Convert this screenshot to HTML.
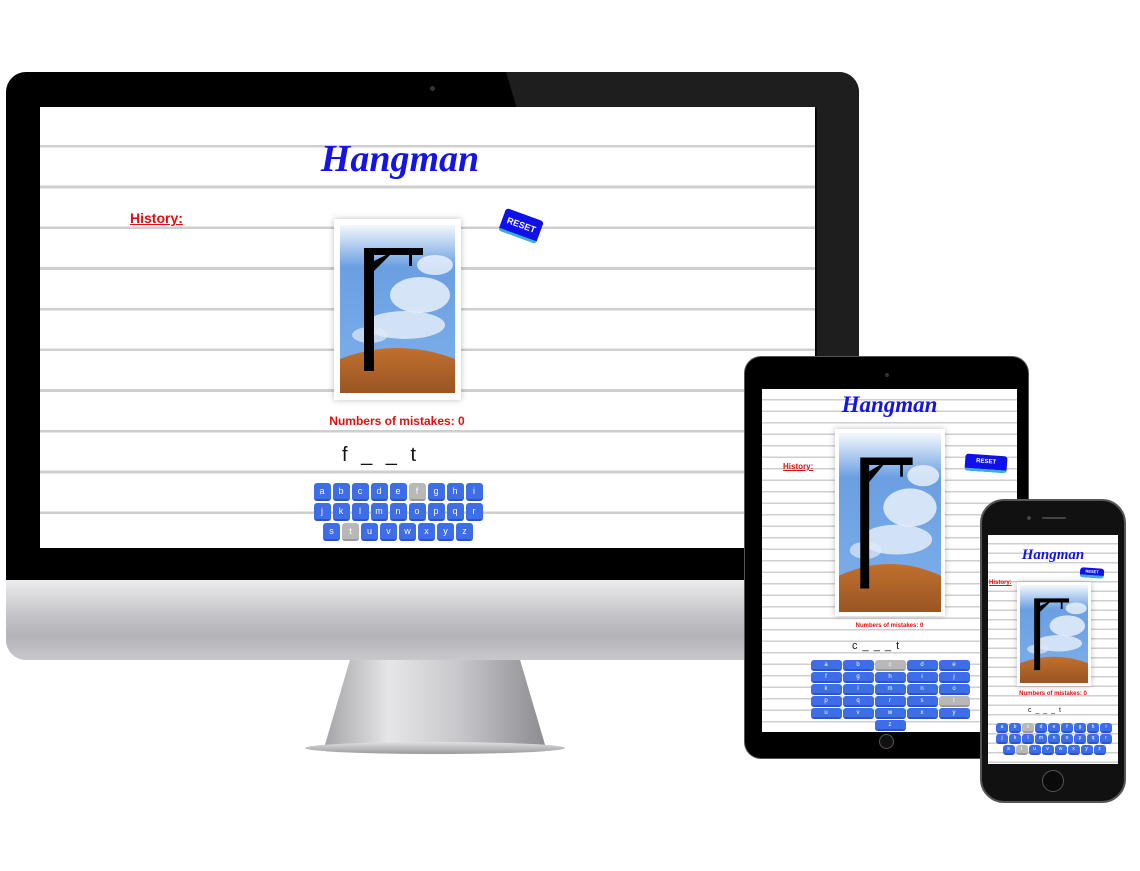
<!DOCTYPE html>
<html><head><meta charset="utf-8"><style>
*{margin:0;padding:0;box-sizing:border-box}
body{width:1140px;height:871px;background:#fff;position:relative;overflow:hidden;font-family:"Liberation Sans",sans-serif}
.a{position:absolute}
.lined{background-color:#fff;background-image:repeating-linear-gradient(to bottom,transparent 0,transparent var(--g),#cfcfcf var(--g),#cfcfcf calc(var(--g) + var(--t)))}
.title{font-family:"Liberation Serif",serif;font-style:italic;color:#1414e6;text-align:center;position:absolute;font-weight:bold}
.hist{color:#e01010;font-weight:bold;text-decoration:underline;position:absolute}
.mis{color:#e01010;font-weight:bold;position:absolute;text-align:center}
.kb{position:absolute;display:flex;flex-wrap:wrap;justify-content:center}
.k{background:#3d6ee8;color:#fff;border-radius:3px;display:flex;align-items:center;justify-content:center;border-bottom:2px solid #2a55c8}
.k.g{background:#b8b8b8;border-bottom-color:#999}
.card{position:absolute;background:#fff;box-shadow:0 0 6px rgba(0,0,0,.25)}
.reset{position:absolute;background:#1010e8;color:#fff;font-weight:bold;display:flex;align-items:center;justify-content:center;border-bottom:3px solid #3ab0d8;border-radius:3px}
</style></head><body>
<svg width="0" height="0" style="position:absolute">
<defs>
<linearGradient id="sky" x1="0" y1="0" x2="0" y2="1"><stop offset="0" stop-color="#f4f8fd"/><stop offset=".25" stop-color="#6a9fe2"/><stop offset="1" stop-color="#7fb0ea"/></linearGradient>
<linearGradient id="gr" x1="0" y1="0" x2="0" y2="1"><stop offset="0" stop-color="#c0702e"/><stop offset="1" stop-color="#9a5522"/></linearGradient>
<symbol id="pic" viewBox="0 0 115 168" preserveAspectRatio="none">
<rect width="115" height="168" fill="url(#sky)"/>
<ellipse cx="80" cy="70" rx="30" ry="18" fill="#e8f0fa" opacity=".85"/>
<ellipse cx="65" cy="100" rx="40" ry="14" fill="#e8f0fa" opacity=".8"/>
<ellipse cx="95" cy="40" rx="18" ry="10" fill="#eef4fb" opacity=".8"/>
<ellipse cx="30" cy="110" rx="18" ry="8" fill="#e0eaf8" opacity=".7"/>
<path d="M0 134 Q57 112 115 134 L115 168 L0 168Z" fill="url(#gr)"/>
<path d="M24 23h59v7h-49v116h-10z" fill="#000"/>
<path d="M34 36l12-6h4l-16 16z" fill="#000"/>
<rect x="69" y="30" width="3" height="11" fill="#000"/>
</symbol>
</defs></svg>

<!-- Desktop monitor -->
<div class="a" style="left:6px;top:72px;width:853px;height:588px;border-radius:20px;background:#c8c8ca;overflow:hidden">
 <div class="a" style="left:0;top:0;width:853px;height:508px;background:#000"></div>
 <div class="a" style="left:500px;top:0;width:353px;height:476px;background:#1e1e1e;clip-path:polygon(0 0,100% 0,100% 100%,88% 100%,88% 7.5%,3% 7.5%)"></div>
 <div class="a" style="left:0;top:508px;width:853px;height:80px;background:linear-gradient(180deg,#ececee,#c4c4c8 45%,#b4b4b8 70%,#c8c8cc)"></div>
</div>
<div class="a" style="left:430px;top:86px;width:5px;height:5px;border-radius:50%;background:#333"></div>
<div class="a" style="left:320px;top:660px;width:230px;height:86px;background:linear-gradient(90deg,#a0a0a4,#e6e6e8 30%,#c8c8cc 60%,#8a8a8e);clip-path:polygon(13% 0,87% 0,98% 100%,2% 100%)"></div>
<div class="a" style="left:305px;top:742px;width:260px;height:12px;border-radius:50%;background:linear-gradient(180deg,#e0e0e2,#9a9a9e)"></div>

<div class="a lined" style="left:40px;top:107px;width:775px;height:441px;--g:38px;--t:2.7px;background-position:0 0;overflow:hidden">
 <div class="title" style="left:0;width:720px;top:30px;font-size:38px">Hangman</div>
 <div class="hist" style="left:90px;top:103px;font-size:14px">History:</div>
 <div class="card" style="left:294px;top:112px;width:127px;height:181px"><svg class="a" style="left:6px;top:6px" width="115" height="168"><use href="#pic"/></svg></div>
 <div class="reset" style="left:461px;top:107px;width:40px;height:24px;font-size:9px;transform:rotate(20deg)">RESET</div>
 <div class="mis" style="left:257px;width:200px;top:307px;font-size:12px">Numbers of mistakes: 0</div>
 <div class="a" style="left:302px;top:337px;font-size:20px;word-spacing:8px;color:#111">f _ _ t</div>
 <div class="kb" style="left:269px;top:376px;width:178px;gap:2px 2px;font-size:9px">
  <div class="k" style="width:17px;height:18px">a</div><div class="k" style="width:17px;height:18px">b</div><div class="k" style="width:17px;height:18px">c</div><div class="k" style="width:17px;height:18px">d</div><div class="k" style="width:17px;height:18px">e</div><div class="k g" style="width:17px;height:18px">f</div><div class="k" style="width:17px;height:18px">g</div><div class="k" style="width:17px;height:18px">h</div><div class="k" style="width:17px;height:18px">i</div>
  <div class="k" style="width:17px;height:18px">j</div><div class="k" style="width:17px;height:18px">k</div><div class="k" style="width:17px;height:18px">l</div><div class="k" style="width:17px;height:18px">m</div><div class="k" style="width:17px;height:18px">n</div><div class="k" style="width:17px;height:18px">o</div><div class="k" style="width:17px;height:18px">p</div><div class="k" style="width:17px;height:18px">q</div><div class="k" style="width:17px;height:18px">r</div>
  <div class="k" style="width:17px;height:18px">s</div><div class="k g" style="width:17px;height:18px">t</div><div class="k" style="width:17px;height:18px">u</div><div class="k" style="width:17px;height:18px">v</div><div class="k" style="width:17px;height:18px">w</div><div class="k" style="width:17px;height:18px">x</div><div class="k" style="width:17px;height:18px">y</div><div class="k" style="width:17px;height:18px">z</div>
 </div>
</div>

<!-- Tablet -->
<div class="a" style="left:745px;top:357px;width:283px;height:401px;border-radius:16px;background:#000;box-shadow:0 0 0 1px #555"></div>
<div class="a" style="left:885px;top:373px;width:4px;height:4px;border-radius:50%;background:#333"></div>
<div class="a" style="left:879px;top:734px;width:15px;height:15px;border-radius:50%;border:1.5px solid #555;background:#111"></div>
<div class="a lined" style="left:762px;top:389px;width:255px;height:343px;--g:10px;--t:1.5px;overflow:hidden">
 <div class="title" style="left:0;width:255px;top:3px;font-size:23px">Hangman</div>
 <div class="hist" style="left:21px;top:73px;font-size:8px">History:</div>
 <div class="card" style="left:73px;top:40px;width:110px;height:187px"><svg class="a" style="left:4px;top:4px" width="102" height="179"><use href="#pic"/></svg></div>
 <div class="reset" style="left:203px;top:66px;width:42px;height:17px;font-size:6px;transform:rotate(4deg)">RESET</div>
 <div class="mis" style="left:60px;width:135px;top:234px;font-size:6px">Numbers of mistakes: 0</div>
 <div class="a" style="left:90px;top:251px;font-size:11px;word-spacing:2px;color:#111">c _ _ _ t</div>
 <div class="kb" style="left:47px;top:271px;width:162px;gap:1px 1px;font-size:6px">
  <div class="k" style="width:31px;height:11px">a</div><div class="k" style="width:31px;height:11px">b</div><div class="k g" style="width:31px;height:11px">c</div><div class="k" style="width:31px;height:11px">d</div><div class="k" style="width:31px;height:11px">e</div>
  <div class="k" style="width:31px;height:11px">f</div><div class="k" style="width:31px;height:11px">g</div><div class="k" style="width:31px;height:11px">h</div><div class="k" style="width:31px;height:11px">i</div><div class="k" style="width:31px;height:11px">j</div>
  <div class="k" style="width:31px;height:11px">k</div><div class="k" style="width:31px;height:11px">l</div><div class="k" style="width:31px;height:11px">m</div><div class="k" style="width:31px;height:11px">n</div><div class="k" style="width:31px;height:11px">o</div>
  <div class="k" style="width:31px;height:11px">p</div><div class="k" style="width:31px;height:11px">q</div><div class="k" style="width:31px;height:11px">r</div><div class="k" style="width:31px;height:11px">s</div><div class="k g" style="width:31px;height:11px">t</div>
  <div class="k" style="width:31px;height:11px">u</div><div class="k" style="width:31px;height:11px">v</div><div class="k" style="width:31px;height:11px">w</div><div class="k" style="width:31px;height:11px">x</div><div class="k" style="width:31px;height:11px">y</div>
  <div class="k" style="width:31px;height:11px">z</div>
 </div>
</div>

<!-- Phone -->
<div class="a" style="left:980px;top:499px;width:146px;height:304px;border-radius:24px;background:#111;border:2px solid #555"></div>
<div class="a" style="left:1027px;top:516px;width:4px;height:4px;border-radius:50%;background:#444"></div>
<div class="a" style="left:1042px;top:517px;width:24px;height:2px;border-radius:1px;background:#444"></div>
<div class="a" style="left:1042px;top:770px;width:22px;height:22px;border-radius:50%;border:1.5px solid #555;background:#0a0a0a"></div>
<div class="a lined" style="left:988px;top:535px;width:130px;height:229px;--g:8px;--t:1.5px;overflow:hidden">
 <div class="title" style="left:0;width:130px;top:12px;font-size:15px">Hangman</div>
 <div class="reset" style="left:92px;top:33px;width:24px;height:10px;font-size:4px;transform:rotate(4deg)">RESET</div>
 <div class="hist" style="left:1px;top:45px;font-size:6px">History:</div>
 <div class="card" style="left:29px;top:47px;width:74px;height:104px"><svg class="a" style="left:3px;top:3px" width="68" height="98"><use href="#pic"/></svg></div>
 <div class="mis" style="left:10px;width:110px;top:156px;font-size:6px">Numbers of mistakes: 0</div>
 <div class="a" style="left:40px;top:172px;font-size:7px;word-spacing:2px;color:#111">c _ _ _ t</div>
 <div class="kb" style="left:6px;top:188px;width:120px;gap:1px 1px;font-size:5px">
  <div class="k" style="width:12px;height:10px">a</div><div class="k" style="width:12px;height:10px">b</div><div class="k g" style="width:12px;height:10px">c</div><div class="k" style="width:12px;height:10px">d</div><div class="k" style="width:12px;height:10px">e</div><div class="k" style="width:12px;height:10px">f</div><div class="k" style="width:12px;height:10px">g</div><div class="k" style="width:12px;height:10px">h</div><div class="k" style="width:12px;height:10px">i</div>
  <div class="k" style="width:12px;height:10px">j</div><div class="k" style="width:12px;height:10px">k</div><div class="k" style="width:12px;height:10px">l</div><div class="k" style="width:12px;height:10px">m</div><div class="k" style="width:12px;height:10px">n</div><div class="k" style="width:12px;height:10px">o</div><div class="k" style="width:12px;height:10px">p</div><div class="k" style="width:12px;height:10px">q</div><div class="k" style="width:12px;height:10px">r</div>
  <div class="k" style="width:12px;height:10px">s</div><div class="k g" style="width:12px;height:10px">t</div><div class="k" style="width:12px;height:10px">u</div><div class="k" style="width:12px;height:10px">v</div><div class="k" style="width:12px;height:10px">w</div><div class="k" style="width:12px;height:10px">x</div><div class="k" style="width:12px;height:10px">y</div><div class="k" style="width:12px;height:10px">z</div>
 </div>
</div>
</body></html>
